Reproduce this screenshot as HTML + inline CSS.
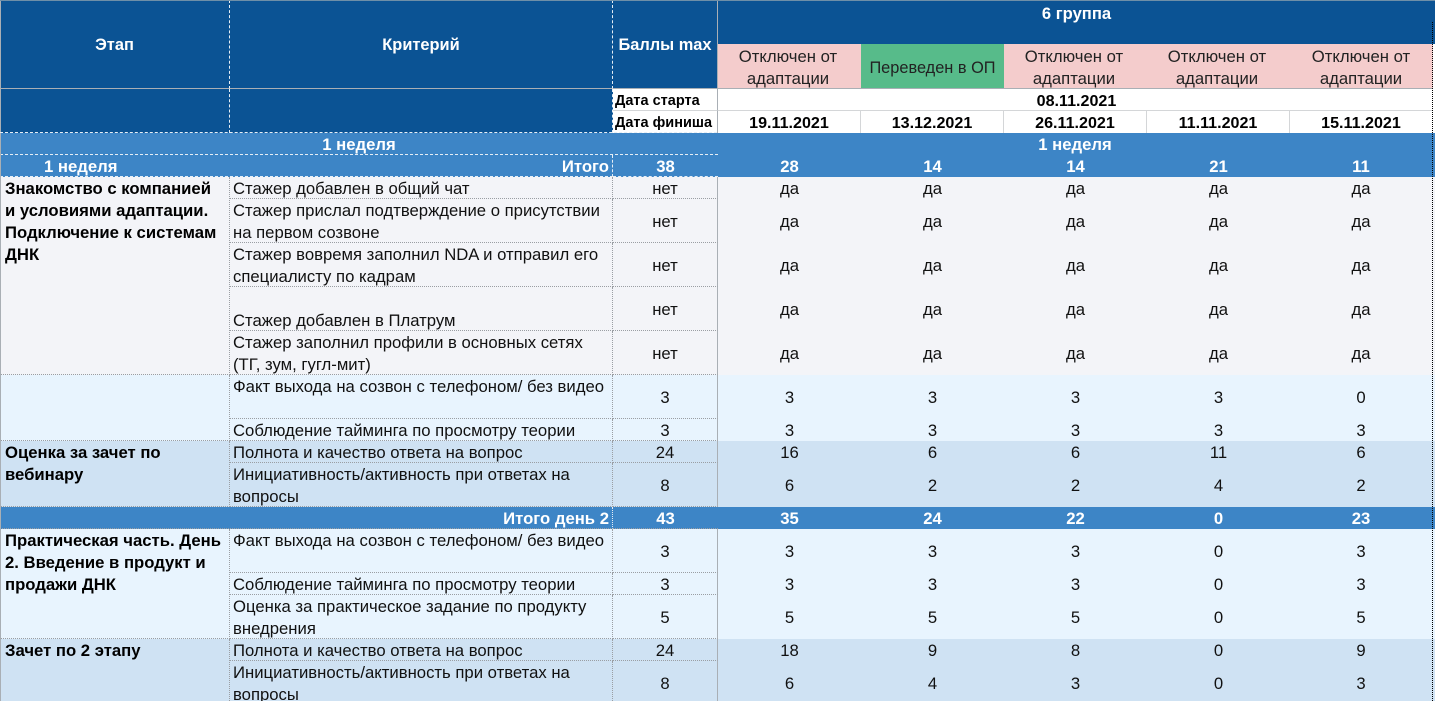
<!DOCTYPE html>
<html lang="ru"><head><meta charset="utf-8"><title>Таблица</title>
<style>
html,body{margin:0;padding:0;background:#fff;width:1435px;height:701px;overflow:hidden}
#w{position:relative;width:1435px;height:701px;overflow:hidden;font:16.7px/22px "Liberation Sans",Arial,sans-serif;color:#111}
#g{display:grid;grid-template-columns:230px 383px 105px 143px 143px 143px 143px 145px;grid-template-rows:44px 45px 22px 22px 22px 22px 22px 44px 44px 44px 44px 44px 22px 22px 44px 22px 44px 22px 44px 22px 44px;grid-auto-flow:row}
#g>div{box-sizing:border-box;min-width:0;white-space:nowrap;padding-top:1px}
#g>div.mid{padding-top:2px}
#g>div.bot{padding-top:23px}
#g>div.pk{padding-top:2px}
#g>div.gr{padding-top:3px}
#g>div.hd{padding-top:1px}
.d{background:#0b5394;color:#fff;font-weight:bold;font-size:16.4px}
.h{background:#3d85c6;color:#fff;font-weight:bold}
.r{background:#f3f4f8}.l{background:#e8f4fe}.s{background:#cfe2f3}
.vd{border-right:1px dashed #e6eef5}
.bd{border-bottom:1px dashed #e6eef5}
.sv{border-right:1px solid #a9afb5}
.sb{border-bottom:1px solid #a9afb5}
.pv{border-right:1px dotted #9a9ea3}
.pb{border-bottom:1px dotted #9a9ea3}
.t{padding-left:3px}
.a{padding-left:5px;font-weight:bold;color:#000}
.c{text-align:center}
.mid{display:flex;align-items:center;justify-content:center;text-align:center}
.x{padding-right:3px}
.e{padding-right:3px;text-align:center}
.lab{font-size:14.5px;font-weight:bold;padding-left:2px;color:#000;background:#fff}
.dt{background:#fff;font-weight:bold;font-size:16.1px;text-align:center;color:#000;border-right:1px solid #d4d6d8}
.pk{background:#f4cccc;color:#222;text-align:center}
.gr{background:#57bb8a;color:#222;font-size:16.35px}
#left{position:absolute;left:0;top:0;width:1px;height:701px;background:#a9afb5}
#top{position:absolute;left:0;top:0;width:1435px;height:1px;background:#6f8fa8}
#rg{position:absolute;left:1432px;top:22px;width:0;height:679px;border-left:1px dotted #000}
#st{position:absolute;left:1433px;top:44px;width:2px;height:88px;background:#fff}
#ln{position:absolute;left:0;top:132px;width:717px;height:0;border-top:1px dashed #e6eef5}
</style></head><body><div id="w"><div id="g">
<div class="d vd sb mid hd" style="grid-row:span 2">Этап</div>
<div class="d vd sb mid hd" style="grid-row:span 2">Критерий</div>
<div class="d sv sb mid hd" style="grid-row:span 2">Баллы max</div>
<div class="d c" style="grid-column:span 5;padding-top:3px;font-size:16.6px">6 группа</div>
<div class="pk sb x">Отключен от<br>адаптации</div>
<div class="pk gr sb mid">Переведен в ОП</div>
<div class="pk sb x">Отключен от<br>адаптации</div>
<div class="pk sb x">Отключен от<br>адаптации</div>
<div class="pk sb e">Отключен от<br>адаптации</div>

<div class="d vd" style="grid-row:span 2"></div>
<div class="d vd" style="grid-row:span 2"></div>
<div class="lab sv" style="border-bottom:1px solid #d4d6d8">Дата старта</div>
<div class="dt" style="grid-column:span 5;border-right:0;border-bottom:1px solid #d4d6d8">08.11.2021</div>
<div class="lab sv">Дата финиша</div>
<div class="dt">19.11.2021</div><div class="dt">13.12.2021</div><div class="dt">26.11.2021</div><div class="dt">11.11.2021</div><div class="dt e" style="border:0">15.11.2021</div>

<div class="h c bd" style="grid-column:span 3">1 неделя</div>
<div class="h c" style="grid-column:span 5;padding-right:3px">1 неделя</div>

<div class="h bd" style="grid-column:span 2;display:flex;justify-content:space-between;padding:1px 3px 0 44px;border-right:1px dashed #e6eef5"><span>1 неделя</span><span>Итого</span></div>
<div class="h c bd">38</div>
<div class="h c">28</div><div class="h c">14</div><div class="h c">14</div><div class="h c">21</div><div class="h e">11</div>

<div class="r a pv pb" style="grid-row:span 5">Знакомство с компанией<br>и условиями адаптации.<br>Подключение к системам<br>ДНК</div>
<div class="r t pv pb">Стажер добавлен в общий чат</div>
<div class="r c pb sv">нет</div>
<div class="r c">да</div><div class="r c">да</div><div class="r c">да</div><div class="r c">да</div><div class="r e">да</div>

<div class="r t pv pb">Стажер прислал подтверждение о присутствии<br>на первом созвоне</div>
<div class="r mid pb sv">нет</div>
<div class="r mid">да</div><div class="r mid">да</div><div class="r mid">да</div><div class="r mid">да</div><div class="r mid x">да</div>

<div class="r t pv pb">Стажер вовремя заполнил NDA и отправил его<br>специалисту по кадрам</div>
<div class="r mid pb sv">нет</div>
<div class="r mid">да</div><div class="r mid">да</div><div class="r mid">да</div><div class="r mid">да</div><div class="r mid x">да</div>

<div class="r t pv pb bot">Стажер добавлен в Платрум</div>
<div class="r mid pb sv">нет</div>
<div class="r mid">да</div><div class="r mid">да</div><div class="r mid">да</div><div class="r mid">да</div><div class="r mid x">да</div>

<div class="r t pv pb">Стажер заполнил профили в основных сетях<br>(ТГ, зум, гугл-мит)</div>
<div class="r mid pb sv">нет</div>
<div class="r mid">да</div><div class="r mid">да</div><div class="r mid">да</div><div class="r mid">да</div><div class="r mid x">да</div>

<div class="l pv pb" style="grid-row:span 2"></div>
<div class="l t pv pb">Факт выхода на созвон с телефоном/ без видео</div>
<div class="l mid pb sv">3</div>
<div class="l mid">3</div><div class="l mid">3</div><div class="l mid">3</div><div class="l mid">3</div><div class="l mid x">0</div>

<div class="l t pv pb">Соблюдение тайминга по просмотру теории</div>
<div class="l c pb sv">3</div>
<div class="l c">3</div><div class="l c">3</div><div class="l c">3</div><div class="l c">3</div><div class="l e">3</div>

<div class="s a pv pb" style="grid-row:span 2">Оценка за зачет по<br>вебинару</div>
<div class="s t pv pb">Полнота и качество ответа на вопрос</div>
<div class="s c pb sv">24</div>
<div class="s c">16</div><div class="s c">6</div><div class="s c">6</div><div class="s c">11</div><div class="s e">6</div>

<div class="s t pv pb">Инициативность/активность при ответах на<br>вопросы</div>
<div class="s mid pb sv">8</div>
<div class="s mid">6</div><div class="s mid">2</div><div class="s mid">2</div><div class="s mid">4</div><div class="s mid x">2</div>

<div class="h pb" style="grid-column:span 2;text-align:right;padding-right:3px;border-right:1px dotted #e6eef5">Итого день 2</div>
<div class="h c pb">43</div>
<div class="h c">35</div><div class="h c">24</div><div class="h c">22</div><div class="h c">0</div><div class="h e">23</div>

<div class="l a pv pb" style="grid-row:span 3">Практическая часть. День<br>2. Введение в продукт и<br>продажи ДНК</div>
<div class="l t pv pb">Факт выхода на созвон с телефоном/ без видео</div>
<div class="l mid pb sv">3</div>
<div class="l mid">3</div><div class="l mid">3</div><div class="l mid">3</div><div class="l mid">0</div><div class="l mid x">3</div>

<div class="l t pv pb">Соблюдение тайминга по просмотру теории</div>
<div class="l c pb sv">3</div>
<div class="l c">3</div><div class="l c">3</div><div class="l c">3</div><div class="l c">0</div><div class="l e">3</div>

<div class="l t pv pb">Оценка за практическое задание по продукту<br>внедрения</div>
<div class="l mid pb sv">5</div>
<div class="l mid">5</div><div class="l mid">5</div><div class="l mid">5</div><div class="l mid">0</div><div class="l mid x">5</div>

<div class="s a pv" style="grid-row:span 2">Зачет по 2 этапу</div>
<div class="s t pv pb">Полнота и качество ответа на вопрос</div>
<div class="s c pb sv">24</div>
<div class="s c">18</div><div class="s c">9</div><div class="s c">8</div><div class="s c">0</div><div class="s e">9</div>

<div class="s t pv">Инициативность/активность при ответах на<br>вопросы</div>
<div class="s mid sv">8</div>
<div class="s mid">6</div><div class="s mid">4</div><div class="s mid">3</div><div class="s mid">0</div><div class="s mid x">3</div>
</div>
<div id="left"></div><div id="top"></div><div id="st"></div><div id="rg"></div><div id="ln"></div>
</div></body></html>
